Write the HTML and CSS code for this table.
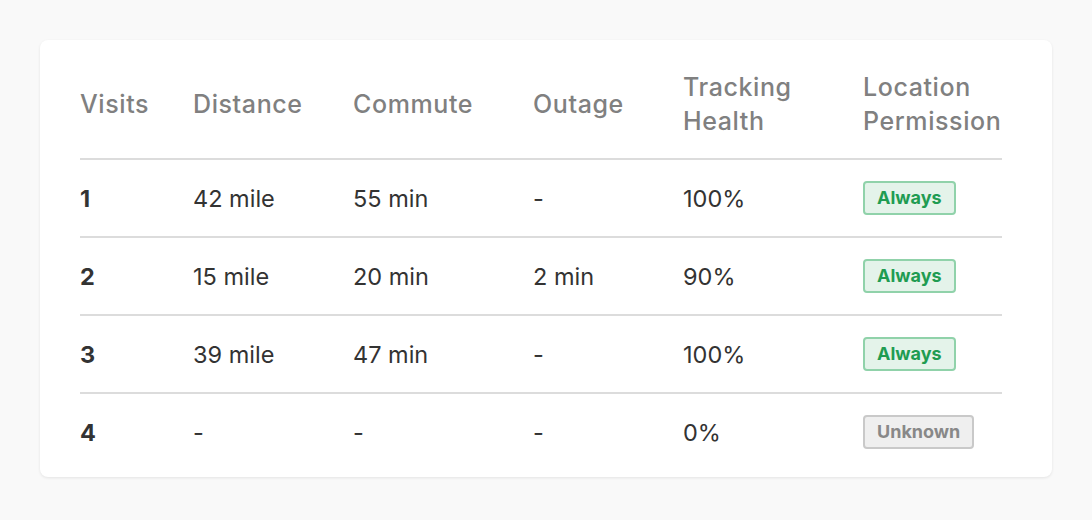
FILE: index.html
```html
<!DOCTYPE html>
<html>
<head>
<meta charset="utf-8">
<link rel="stylesheet" href="styles.css">
</head>
<body>
<div class="card">
  <table class="visits">
    <colgroup>
      <col class="c1"><col class="c2"><col class="c3"><col class="c4"><col class="c5"><col class="c6">
    </colgroup>
    <thead>
      <tr>
        <th>Visits</th>
        <th>Distance</th>
        <th>Commute</th>
        <th>Outage</th>
        <th>Tracking<br>Health</th>
        <th>Location<br>Permission</th>
      </tr>
    </thead>
    <tbody>
      <tr>
        <td class="num">1</td><td>42 mile</td><td>55 min</td><td>-</td><td>100%</td>
        <td><span class="badge ok">Always</span></td>
      </tr>
      <tr>
        <td class="num">2</td><td>15 mile</td><td>20 min</td><td>2 min</td><td>90%</td>
        <td><span class="badge ok">Always</span></td>
      </tr>
      <tr>
        <td class="num">3</td><td>39 mile</td><td>47 min</td><td>-</td><td>100%</td>
        <td><span class="badge ok">Always</span></td>
      </tr>
      <tr>
        <td class="num">4</td><td>-</td><td>-</td><td>-</td><td>0%</td>
        <td><span class="badge unk">Unknown</span></td>
      </tr>
    </tbody>
  </table>
</div>
</body>
</html>
```

FILE: styles.css
```css
html, body {
  margin: 0;
  padding: 0;
  background: #f9f9f9;
}
body {
  padding: 40px;
  font-family: Inter, "Liberation Sans", sans-serif;
}
.card {
  width: 1012px;
  box-sizing: border-box;
  background: #fff;
  border-radius: 8px;
  box-shadow: 0 1px 3px rgba(0,0,0,0.09);
  padding: 30px 50px 7px 40px;
}
.visits {
  width: 922px;
  border-collapse: collapse;
  table-layout: fixed;
}
.c1 { width: 113px; }
.c2 { width: 160px; }
.c3 { width: 180px; }
.c4 { width: 150px; }
.c5 { width: 180px; }
.c6 { width: 139px; }
th {
  text-align: left;
  font-weight: 500;
  font-size: 25px;
  letter-spacing: 0.6px;
  line-height: 34px;
  color: #808080;
  padding: 0 0 20px 0;
  vertical-align: middle;
  height: 68px;
  border-bottom: 2px solid #dcdcdc;
  white-space: nowrap;
}
td {
  font-size: 23.5px;
  color: #333;
  height: 76px;
  padding: 0;
  vertical-align: middle;
}
tbody tr + tr td {
  border-top: 2px solid #dcdcdc;
}
td.num {
  font-weight: 700;
}
.badge {
  display: inline-block;
  font-size: 18px;
  font-weight: 700;
  line-height: 30px;
  padding: 0 12px;
  border-radius: 4px;
  border: 2px solid;
}
.badge.ok {
  color: #1f9c52;
  background: #e4f3ea;
  border-color: #90d2aa;
}
.badge.unk {
  color: #888;
  background: #efefef;
  border-color: #c9c9c9;
}
```
